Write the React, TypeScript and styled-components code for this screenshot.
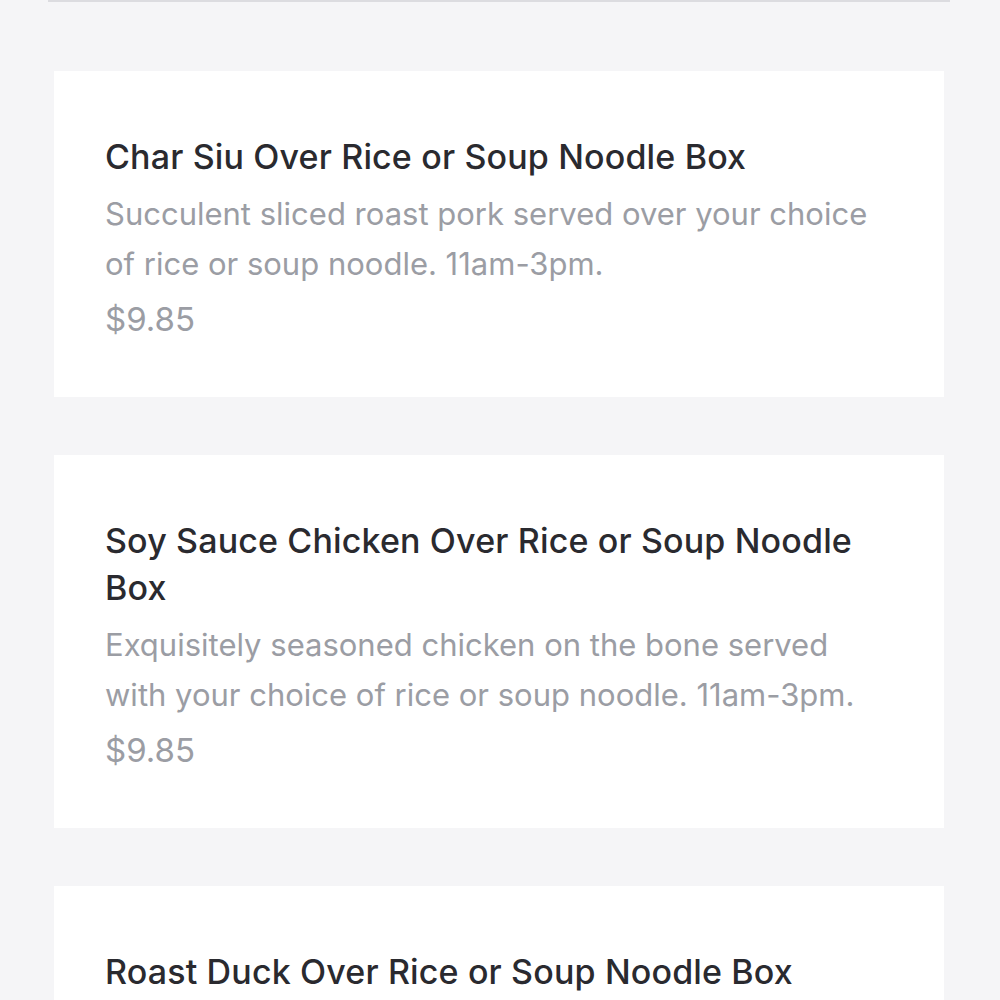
import styled, { createGlobalStyle } from 'styled-components'

const GlobalStyle = createGlobalStyle`
  html, body {
    margin: 0;
    padding: 0;
    background: #f5f5f7;
    font-family: Inter, "Noto Sans", "Liberation Sans", sans-serif;
    -webkit-font-smoothing: antialiased;
  }
`

const Page = styled.div`
  display: flex;
  flex-direction: column;
  padding: 0 56px 0 54px;
`

const Divider = styled.div`
  height: 2px;
  margin: 0 -6px;
  background: #dcdce0;
`

const List = styled.div`
  display: flex;
  flex-direction: column;
  gap: 58px;
  padding-top: 69px;
`

const Card = styled.div`
  background: #ffffff;
  padding: 62px 53px 53px 51px;
`

const Title = styled.h3`
  margin: 0;
  font-size: 34px;
  font-weight: 500;
  line-height: 47px;
  color: #2a2a2f;
  letter-spacing: 0.15px;
`

const Description = styled.p`
  margin: 9px 0 0;
  font-size: 31px;
  font-weight: 400;
  line-height: 50px;
  color: #9b9da4;
  letter-spacing: 0;
`

const Price = styled.div`
  margin-top: 5px;
  font-size: 33px;
  line-height: 50px;
  color: #9b9da4;
`

type MenuItem = {
  name: string
  description: string
  price: string
}

const items: MenuItem[] = [
  {
    name: 'Char Siu Over Rice or Soup Noodle Box',
    description:
      'Succulent sliced roast pork served over your choice of rice or soup noodle. 11am-3pm.',
    price: '$9.85',
  },
  {
    name: 'Soy Sauce Chicken Over Rice or Soup Noodle Box',
    description:
      'Exquisitely seasoned chicken on the bone served with your choice of rice or soup noodle. 11am-3pm.',
    price: '$9.85',
  },
  {
    name: 'Roast Duck Over Rice or Soup Noodle Box',
    description:
      'Tender roast duck served over your choice of rice or soup noodle. 11am-3pm.',
    price: '$10.85',
  },
]

export default function App() {
  return (
    <>
      <GlobalStyle />
      <Page>
        <Divider />
        <List>
          {items.map((item, i) => (
            <Card key={i}>
              <Title>{item.name}</Title>
              <Description>{item.description}</Description>
              <Price>{item.price}</Price>
            </Card>
          ))}
        </List>
      </Page>
    </>
  )
}
